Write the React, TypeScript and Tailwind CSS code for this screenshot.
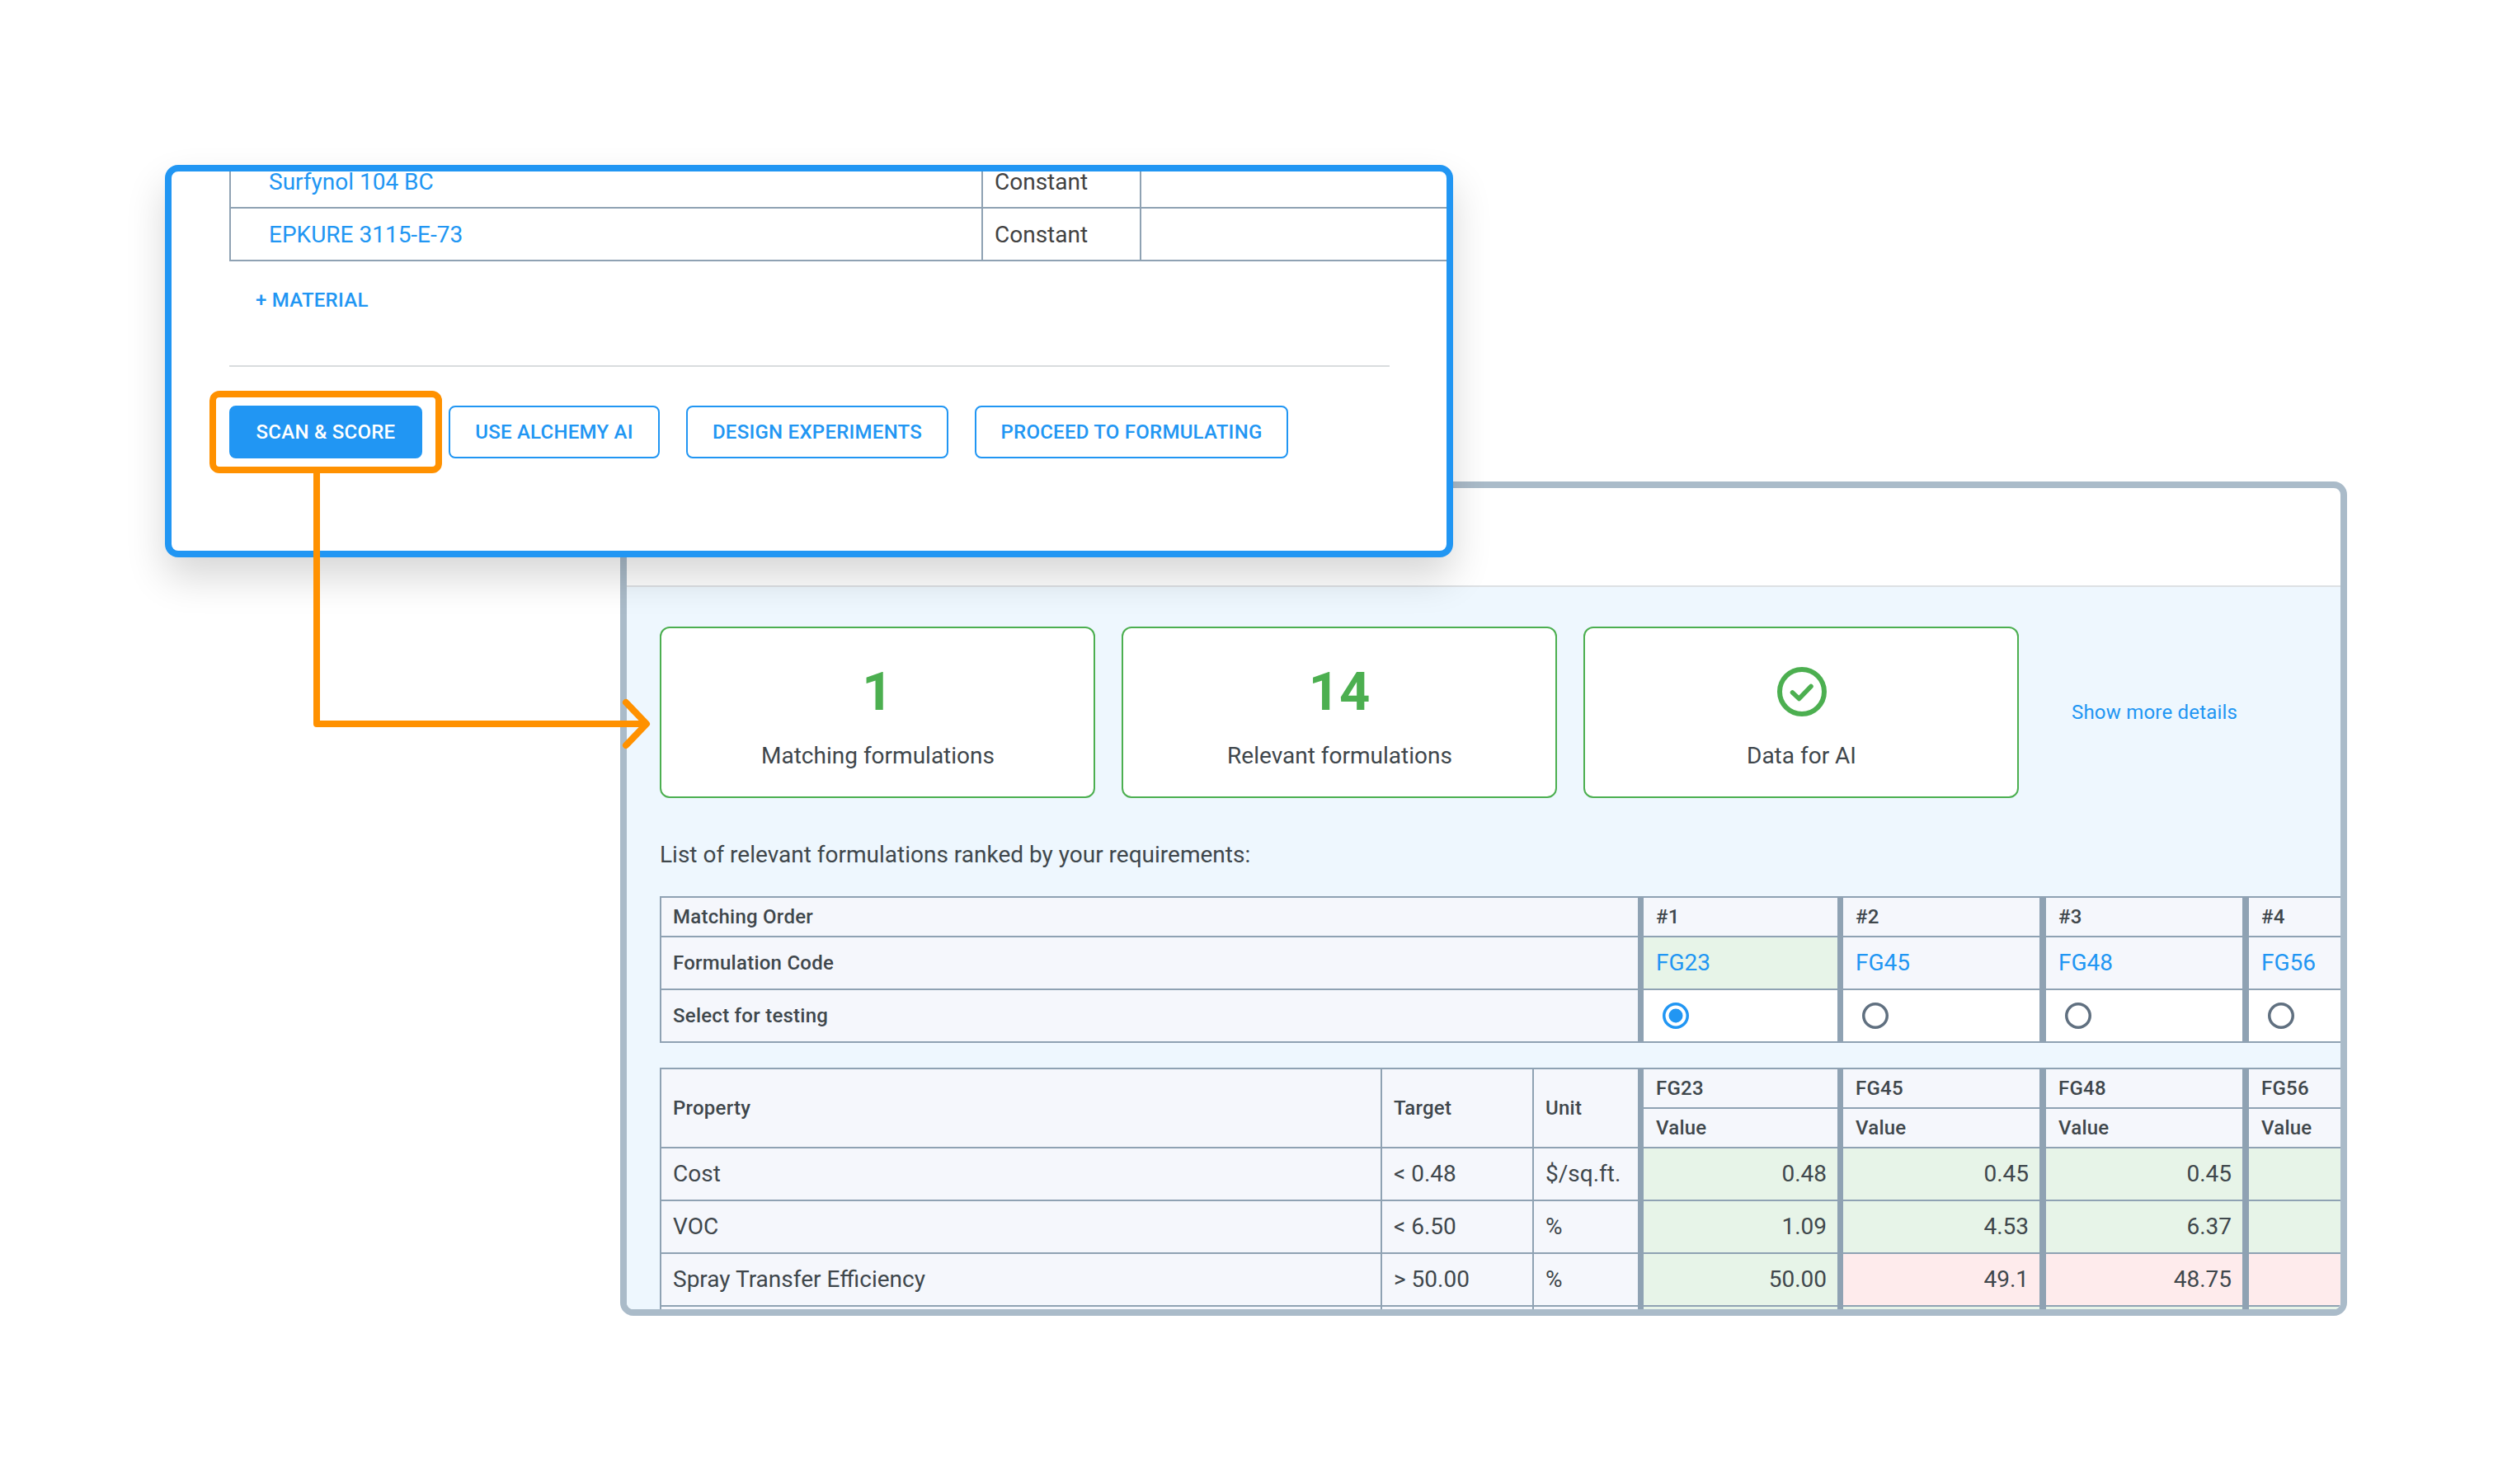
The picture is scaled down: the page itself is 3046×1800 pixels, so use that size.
const font = "font-['Roboto','Liberation_Sans',sans-serif]";

const outlineBtn = "h-16 rounded-lg border-2 border-[#2196f3] text-[#2196f3] text-[24px] tracking-[0.25px] font-medium bg-white flex items-center justify-center";

function Material({ name }: { name: string }) {
  return (
    <div className="grid grid-cols-[912px_192px_1fr] h-16 border-b-2 border-[#8fa2b3]">
      <div className="border-l-2 border-[#8fa2b3] pl-[46px] pt-px flex items-center text-[28px] text-[#2196f3]">{name}</div>
      <div className="border-l-2 border-[#8fa2b3] pl-[14px] pt-px flex items-center text-[28px] text-[#424242]">Constant</div>
      <div className="border-l-2 border-[#8fa2b3]" />
    </div>
  );
}

function StatCard({ children, label }: { children: React.ReactNode; label: string }) {
  return (
    <div className="w-[528px] h-[208px] rounded-xl border-2 border-[#4caf50] bg-white flex flex-col items-center">
      <div className="h-[60px] mt-[47px] flex items-center justify-center text-[65px] font-bold text-[#4caf50]">{children}</div>
      <div className="mt-[28px] pl-px text-[28px] leading-[40px] text-[#3f474c]">{label}</div>
    </div>
  );
}

function Radio({ on }: { on?: boolean }) {
  return (
    <svg width="32" height="32" viewBox="0 0 32 32">
      <circle cx="16" cy="16" r="14.25" fill="none" strokeWidth="3.5" stroke={on ? "#2196f3" : "#607080"} />
      {on && <circle cx="16" cy="16" r="8.5" fill="#2196f3" />}
    </svg>
  );
}

const line = "border-[#8fa2b3]";
const head = "bg-[#f5f7fc] text-[24px] tracking-[0.25px] font-medium text-[#3f474c]";
const body = "text-[28px] text-[#3f474c]";
const green = "bg-[#e7f4e8]";
const pink = "bg-[#feebec]";

// value columns, left border thicknesses differ by a pixel in the picture
const valueBorders = ["border-l-[7px]", "border-l-[7px]", "border-l-[8px]", "border-l-[8px]"];
const valueCols = "grid-cols-[1186px_242px_245px_246px_119px]";
const propCols = "grid-cols-[874px_184px_128px_242px_245px_246px_119px]";

const codes = ["FG23", "FG45", "FG48", "FG56"];

function MatchTable() {
  return (
    <div className={`grid ${valueCols} grid-rows-[48px_64px_64px] w-[2038px] border-b-2 ${line}`}>
      <div className={`${head} border-l-2 border-t-2 ${line} pl-[14px] flex items-center`}>Matching Order</div>
      {["#1", "#2", "#3", "#4"].map((n, i) => (
        <div key={n} className={`${head} ${valueBorders[i]} border-t-2 ${line} pl-[15px] flex items-center`}>{n}</div>
      ))}
      <div className={`${head} border-l-2 border-t-2 ${line} pl-[14px] flex items-center`}>Formulation Code</div>
      {codes.map((c, i) => (
        <div key={c} className={`${i === 0 ? green : "bg-[#f5f7fc]"} ${valueBorders[i]} border-t-2 ${line} pl-[15px] flex items-center text-[28px] text-[#2196f3]`}>{c}</div>
      ))}
      <div className={`${head} border-l-2 border-t-2 ${line} pl-[14px] flex items-center`}>Select for testing</div>
      {codes.map((c, i) => (
        <div key={c} className={`bg-white ${valueBorders[i]} border-t-2 ${line} pl-[23px] flex items-center`}>
          <Radio on={i === 0} />
        </div>
      ))}
    </div>
  );
}

const rows = [
  { name: "Cost", target: "< 0.48", unit: "$/sq.ft.", values: ["0.48", "0.45", "0.45", ""], tone: [green, green, green, green] },
  { name: "VOC", target: "< 6.50", unit: "%", values: ["1.09", "4.53", "6.37", ""], tone: [green, green, green, green] },
  { name: "Spray Transfer Efficiency", target: "> 50.00", unit: "%", values: ["50.00", "49.1", "48.75", ""], tone: [green, pink, pink, pink] },
  { name: "", target: "", unit: "", values: ["", "", "", ""], tone: [green, green, green, green] },
];

function PropertyTable() {
  return (
    <div className={`grid ${propCols} grid-rows-[48px_48px_64px_64px_64px_64px] w-[2038px] mt-[30px]`}>
      <div className={`${head} row-span-2 border-l-2 border-t-2 ${line} pl-[14px] flex items-center`}>Property</div>
      <div className={`${head} row-span-2 border-l-2 border-t-2 ${line} pl-[14px] flex items-center`}>Target</div>
      <div className={`${head} row-span-2 border-l-2 border-t-2 ${line} pl-[14px] flex items-center`}>Unit</div>
      {codes.map((c, i) => (
        <div key={c} className={`${head} ${valueBorders[i]} border-t-2 ${line} pl-[15px] flex items-center`}>{c}</div>
      ))}
      {codes.map((c, i) => (
        <div key={c} className={`${head} ${valueBorders[i]} border-t-2 ${line} pl-[15px] flex items-center`}>Value</div>
      ))}
      {rows.map((r, ri) => (
        <div key={ri} className="contents">
          <div className={`bg-[#f5f7fc] ${body} border-l-2 border-t-2 ${line} pl-[14px] flex items-center`}>{r.name}</div>
          <div className={`bg-[#f5f7fc] ${body} border-l-2 border-t-2 ${line} pl-[14px] flex items-center`}>{r.target}</div>
          <div className={`bg-[#f5f7fc] ${body} border-l-2 border-t-2 ${line} pl-[14px] flex items-center`}>{r.unit}</div>
          {r.values.map((v, i) => (
            <div key={i} className={`${r.tone[i]} ${body} ${valueBorders[i]} border-t-2 ${line} pr-[13px] flex items-center justify-end`}>{v}</div>
          ))}
        </div>
      ))}
    </div>
  );
}

export default function App() {
  return (
    <div className={`relative w-[3046px] h-[1800px] bg-white overflow-hidden ${font}`}>
      {/* results window, sits under the form window */}
      <div className="absolute left-[752px] top-[584px] w-[2094px] h-[1012px] rounded-2xl border-8 border-[#aabbc9] bg-white overflow-hidden flex flex-col">
        <div className="h-[120px] shrink-0 border-b-2 border-[#dde0e3]" />
        <div className="flex-1 bg-[#eef7fe] pl-10 pt-[48px]">
          <div className="flex gap-8 items-center">
            <StatCard label="Matching formulations"><span className="pt-[2px]">1</span></StatCard>
            <StatCard label="Relevant formulations"><span className="pt-[2px]">14</span></StatCard>
            <StatCard label="Data for AI">
              <svg width="60" height="60" viewBox="0 0 60 60" fill="none" stroke="#4caf50" strokeWidth="6" strokeLinecap="round" strokeLinejoin="round" className="ml-px">
                <circle cx="30" cy="30" r="27" />
                <path d="M18.5 31 L26.5 38.5 L41 23.5" strokeWidth="5.5" />
              </svg>
            </StatCard>
            <span className="ml-[32px] text-[24px] tracking-[0.2px] text-[#2196f3]">Show more details</span>
          </div>
          <p className="mt-[49px] text-[28px] leading-[40px] text-[#3f474c]">List of relevant formulations ranked by your requirements:</p>
          <div className="mt-[30px]">
            <MatchTable />
            <PropertyTable />
          </div>
        </div>
      </div>

      {/* form window */}
      <div className="absolute left-[200px] top-[200px] w-[1562px] h-[476px] rounded-2xl border-8 border-[#2196f3] bg-white overflow-hidden shadow-[0_24px_48px_rgba(0,0,0,0.16)]">
        <div className="ml-[70px] -mt-[19px]">
          <Material name="Surfynol 104 BC" />
          <Material name="EPKURE 3115-E-73" />
        </div>
        <div className="ml-[102px] mt-[15px] h-16 flex items-center text-[24px] tracking-[0.25px] font-medium text-[#2196f3]">+ MATERIAL</div>
        <div className="ml-[70px] mt-[47px] w-[1407px] h-0.5 bg-[#d9dcde]" />
        <div className="ml-[70px] mt-[47px] flex gap-8">
          <div className="h-16 w-[234px] rounded-lg bg-[#2196f3] text-white text-[24px] tracking-[0.25px] font-medium flex items-center justify-center">SCAN &amp; SCORE</div>
          <div className={`${outlineBtn} w-[256px]`}>USE ALCHEMY AI</div>
          <div className={`${outlineBtn} w-[318px]`}>DESIGN EXPERIMENTS</div>
          <div className={`${outlineBtn} w-[380px]`}>PROCEED TO FORMULATING</div>
        </div>
      </div>

      {/* annotation: highlight around the button and the arrow to the results */}
      <div className="absolute left-[254px] top-[474px] w-[282px] h-[100px] rounded-xl border-8 border-[#ff9100]" />
      <svg className="absolute left-0 top-0" width="3046" height="1800" fill="none" stroke="#ff9100" strokeWidth="8">
        <path d="M384 570 V878 H782" strokeLinejoin="round" />
        <path d="M759 852 L784 878 L759 904" strokeLinecap="round" strokeLinejoin="round" />
      </svg>
    </div>
  );
}
